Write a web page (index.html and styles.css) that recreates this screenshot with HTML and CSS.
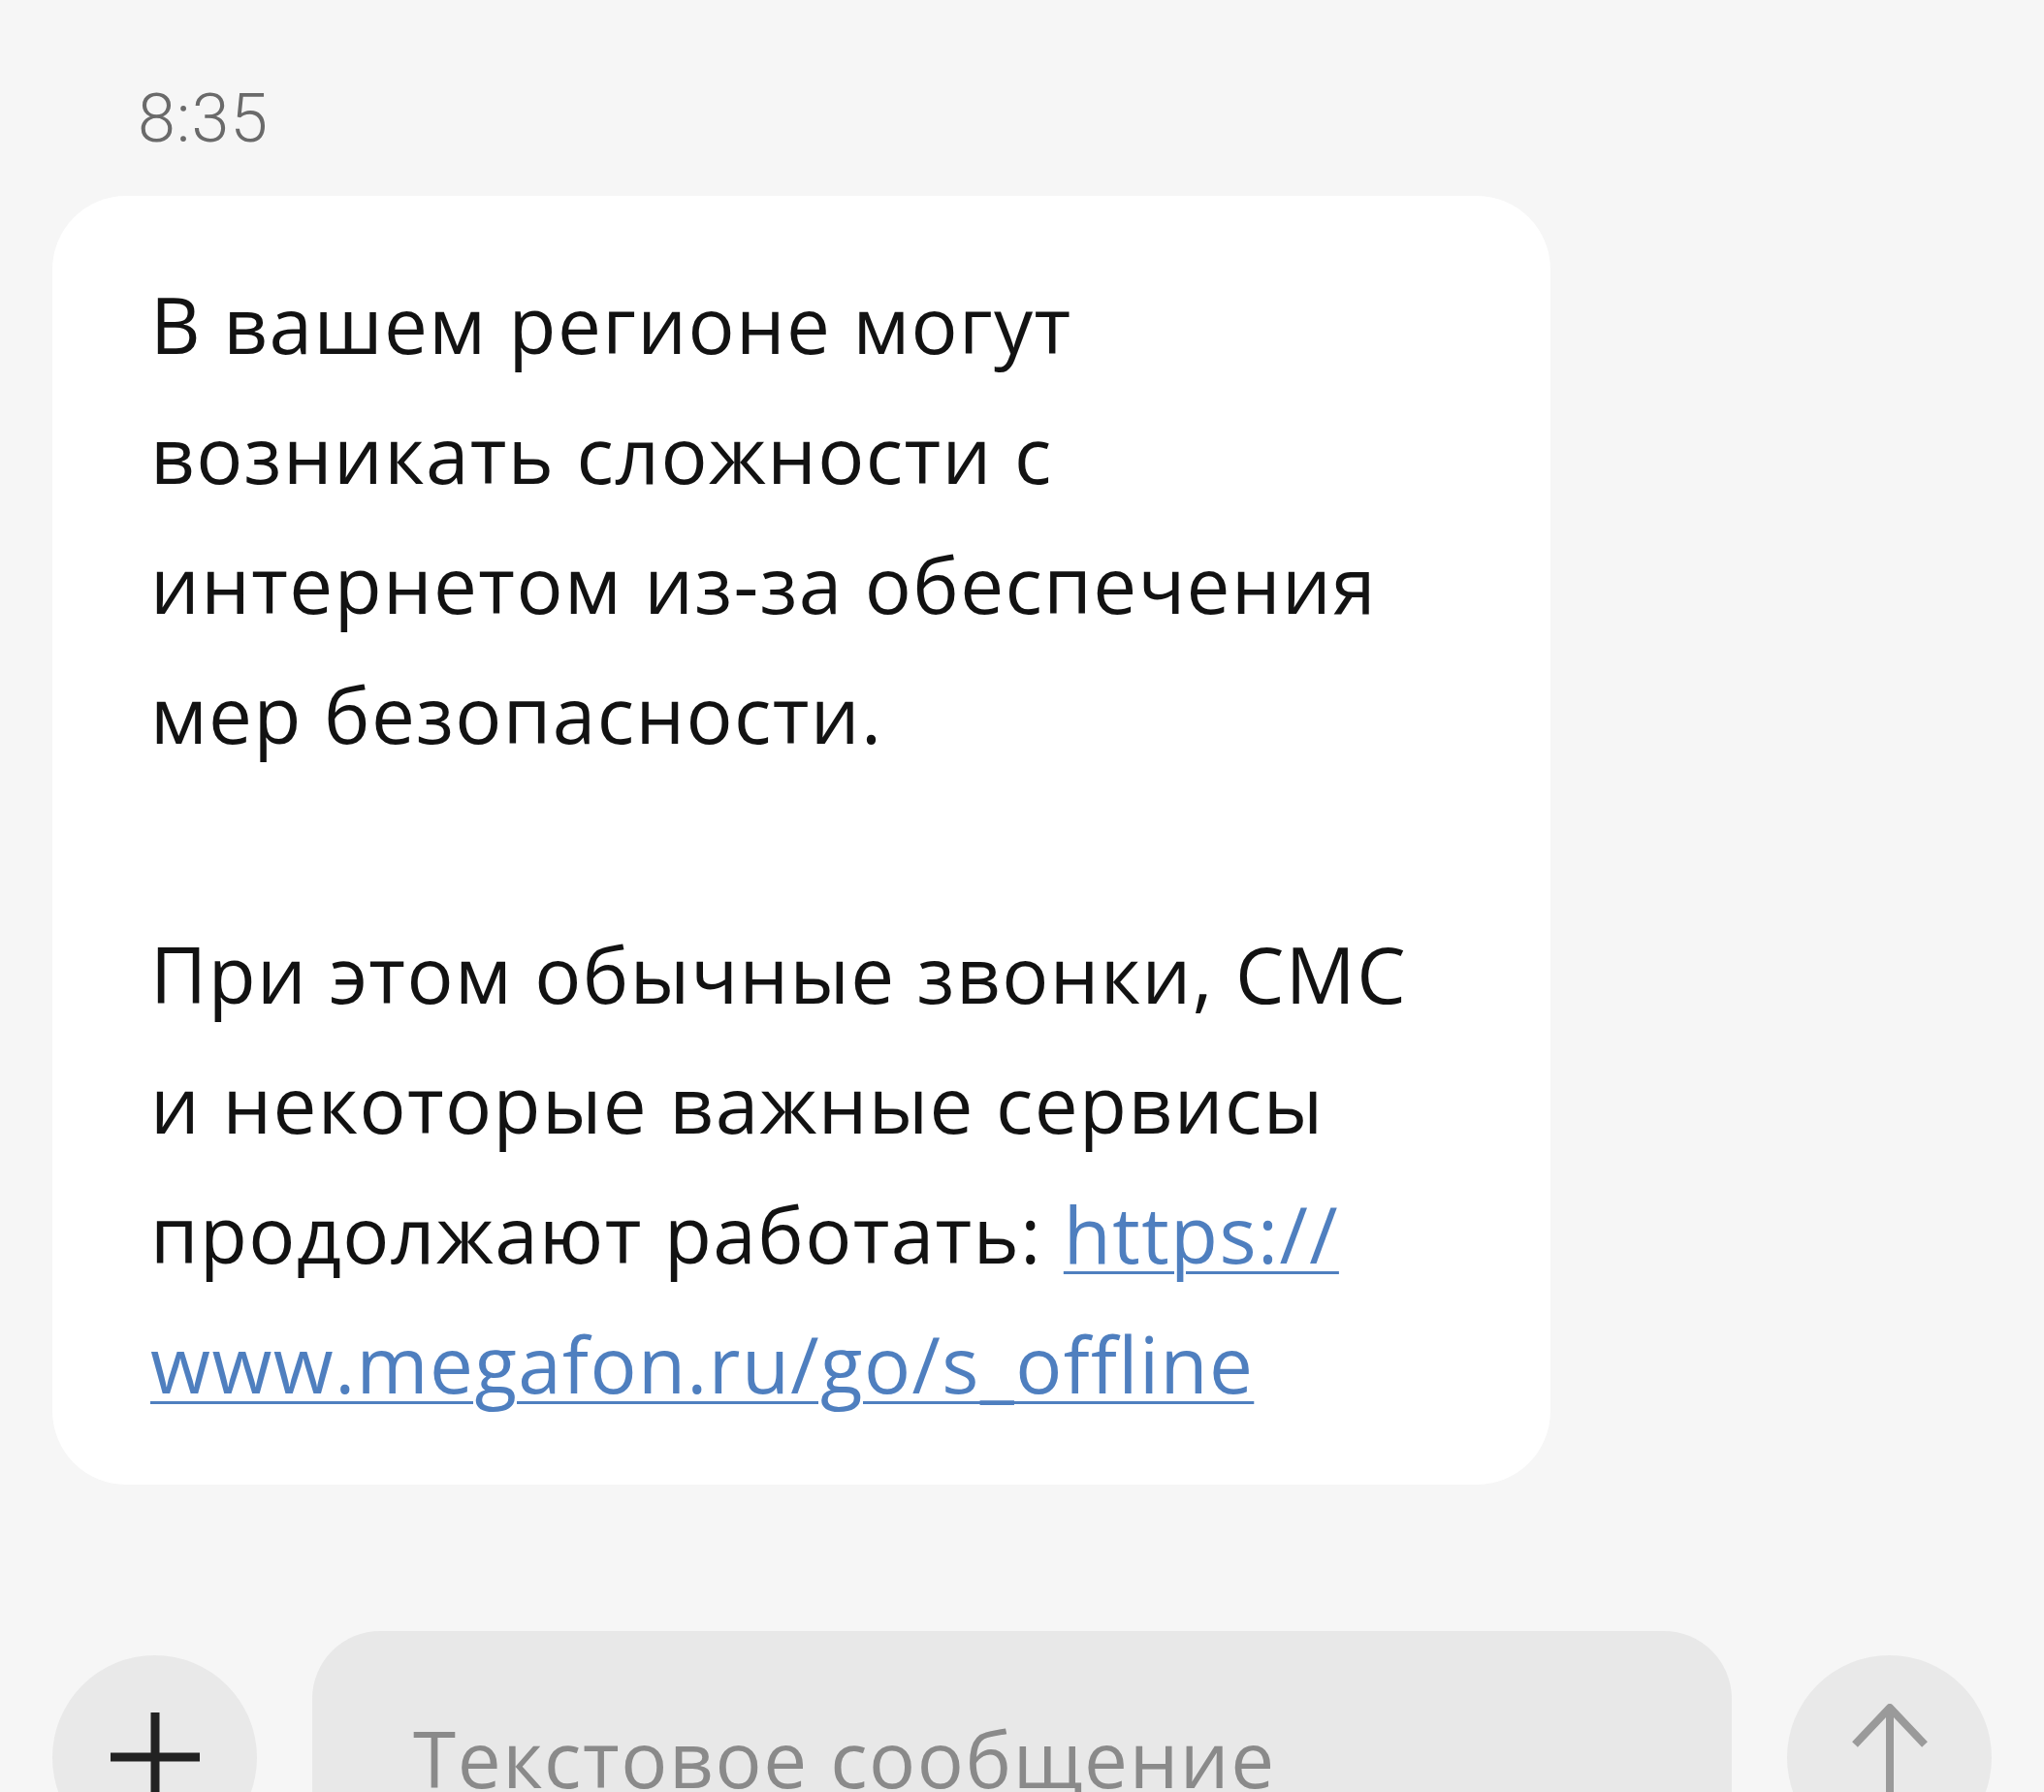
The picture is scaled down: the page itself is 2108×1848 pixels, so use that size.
FILE: index.html
```html
<!DOCTYPE html>
<html lang="ru">
<head>
<meta charset="utf-8">
<title>Сообщения</title>
<link rel="stylesheet" href="styles.css">
</head>
<body>
<main class="thread">
  <div class="time">8:35</div>
  <div class="bubble">
    <p class="msg">В вашем регионе могут<br>возникать сложности с<br>интернетом из-за обеспечения<br>мер безопасности.</p>
    <p class="msg">При этом обычные звонки, СМС<br>и некоторые важные сервисы<br>продолжают работать: <a class="link" href="#">https://<br>www.megafon.ru/go/s_offline</a></p>
  </div>
</main>
<footer class="composer">
  <button class="round-btn add" aria-label="Добавить">
    <svg width="92" height="92" viewBox="0 0 92 92"><path d="M46 0V92M0 46H92" stroke="#222" stroke-width="9" fill="none"/></svg>
  </button>
  <div class="input">Текстовое сообщение</div>
  <button class="round-btn send" aria-label="Отправить">
    <svg width="84" height="110" viewBox="0 0 84 110"><path d="M42 4V110M6 42L42 4L78 42" stroke="#9a9a9a" stroke-width="8" fill="none" stroke-linejoin="round"/></svg>
  </button>
</footer>
</body>
</html>
```
FILE: styles.css
```css
html, body {
  margin: 0;
  padding: 0;
  height: 1848px;
  overflow: hidden;
  background: #f6f6f6;
  font-family: "Open Sans", Roboto, sans-serif;
}

.thread {
  padding: 80px 0 0 54px;
}

.time {
  padding-left: 88px;
  font-family: Roboto, sans-serif;
  font-size: 70px;
  line-height: 84px;
  color: #6a6a6a;
  font-weight: 300;
  letter-spacing: 1px;
}

.bubble {
  margin-top: 38px;
  width: 1545px;
  box-sizing: border-box;
  background: #fff;
  border-radius: 76px;
  padding: 65px 40px 58px 101px;
}

.msg {
  margin: 0;
  font-size: 80px;
  line-height: 134px;
  letter-spacing: 1.4px;
  color: #121212;
}

.msg + .msg {
  margin-top: 134px;
}

.link {
  color: #4f7fbf;
  text-decoration: underline;
  text-decoration-thickness: 3px;
  text-underline-offset: 8px;
}

.composer {
  display: flex;
  align-items: center;
  gap: 57px;
  padding: 151px 54px 0 54px;
}

.round-btn {
  flex: none;
  width: 211px;
  height: 211px;
  border-radius: 50%;
  border: none;
  background: #e9e9e9;
  padding: 0;
  display: flex;
  align-items: center;
  justify-content: center;
}

.input {
  flex: 1;
  height: 260px;
  border-radius: 70px;
  background: #e8e8e8;
  display: flex;
  align-items: center;
  padding-left: 104px;
  font-size: 80px;
  letter-spacing: 1.6px;
  color: #8a8a8a;
}
```
